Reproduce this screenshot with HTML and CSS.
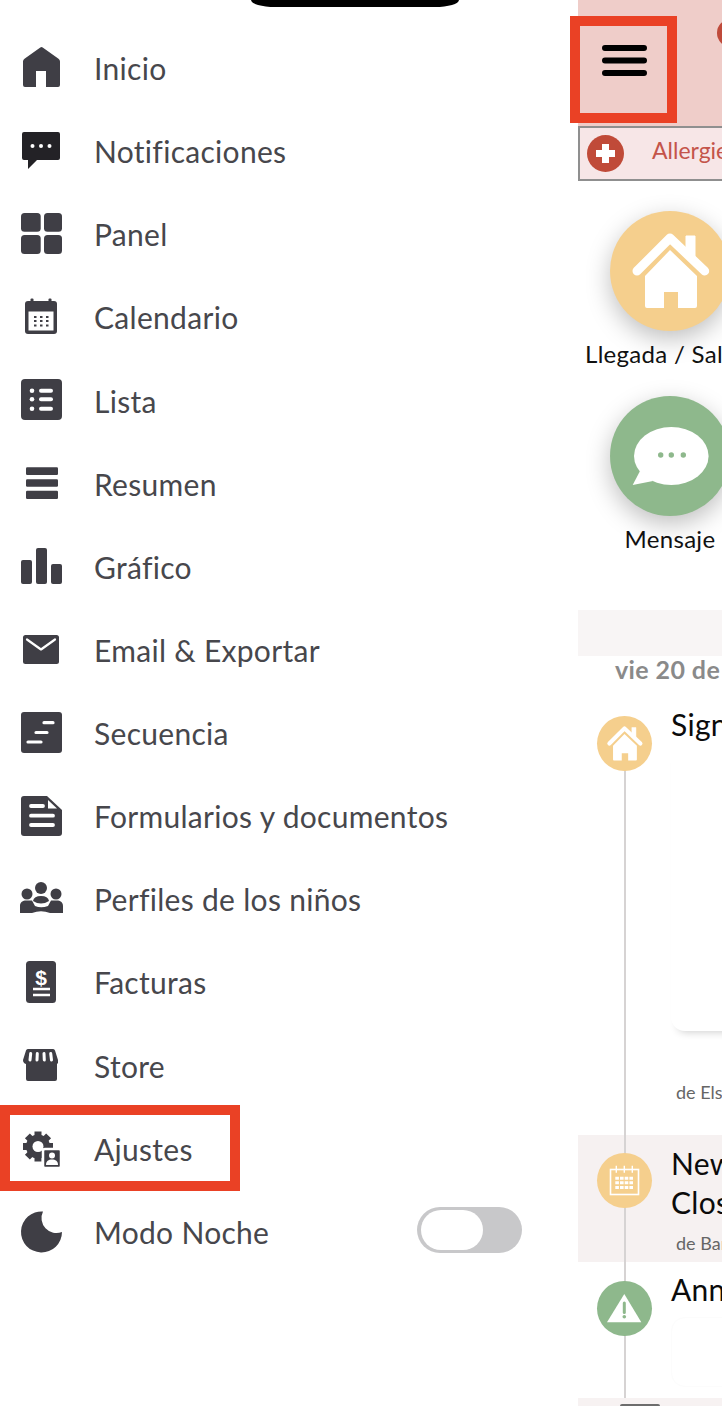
FILE: index.html
```html
<!DOCTYPE html>
<html lang="es">
<head>
<meta charset="utf-8">
<title>Menu</title>
<link rel="stylesheet" href="styles.css">
</head>
<body>
<svg class="defs" width="0" height="0" aria-hidden="true">
  <symbol id="house" viewBox="0 0 120 120">
    <path d="M76 25h9v22h-9z" fill="#fff" stroke="#fff" stroke-linejoin="round"/>
    <path d="M27 60 60 27l34.700 33" fill="none" stroke="#fff" stroke-width="9" stroke-linecap="round" stroke-linejoin="round"/>
    <path d="M60 39 87 65v30a2 2 0 0 1-2 2H68V81H54v16H37a2 2 0 0 1-2-2V65z" fill="#fff"/>
  </symbol>
</svg>
<div class="page">
  <nav class="drawer">
    <div class="item">
      <svg class="ico" viewBox="0 0 44 44"><path d="M21.300.5q1.200-.8 2.400 0L39.500 11.700Q41 12.800 41 14.500V38a2 2 0 0 1-2 2H27V24H17v16H6a2 2 0 0 1-2-2V14.500q0-1.700 1.500-2.800z"/></svg>
      <span class="label">Inicio</span>
    </div>
    <div class="item">
      <svg class="ico ico-dark" viewBox="0 0 44 44"><path d="M5 2h34a2 2 0 0 1 2 2v24a2 2 0 0 1-2 2H18l-9 9v-9H5a2 2 0 0 1-2-2V4a2 2 0 0 1 2-2z"/><g class="wh"><circle cx="13.500" cy="16" r="2"/><circle cx="22" cy="16" r="2"/><circle cx="30.500" cy="16" r="2"/></g></svg>
      <span class="label">Notificaciones</span>
    </div>
    <div class="item">
      <svg class="ico" viewBox="0 0 44 44"><rect x="2" y="0" width="19.700" height="18.700" rx="3.500"/><rect x="25" y="0" width="18" height="18.700" rx="3.500"/><rect x="2" y="22" width="19.700" height="19" rx="3.500"/><rect x="25" y="22" width="18" height="19" rx="3.500"/></svg>
      <span class="label">Panel</span>
    </div>
    <div class="item">
      <svg class="ico" viewBox="0 0 44 44"><rect x="6" y="5" width="32" height="33" rx="3"/><rect x="11.500" y="2.500" width="3" height="5" rx="1"/><rect x="29.500" y="2.500" width="3" height="5" rx="1"/><rect class="wh" x="9.500" y="15.500" width="25" height="19"/><path d="M15 21h15M15 25h15M15 29.500h15" fill="none" stroke="#3f3e45" stroke-width="2" stroke-dasharray="2.500 3.500"/></svg>
      <span class="label">Calendario</span>
    </div>
    <div class="item">
      <svg class="ico" viewBox="0 0 44 44"><rect x="2" y="-1" width="41" height="41" rx="4"/><g class="wh"><circle cx="13" cy="10.700" r="2.300"/><circle cx="13" cy="19.300" r="2.300"/><circle cx="13" cy="28.700" r="2.300"/><rect x="20" y="8.700" width="14" height="4" rx="2"/><rect x="20" y="17.300" width="14" height="4" rx="2"/><rect x="20" y="26.700" width="14" height="4" rx="2"/></g></svg>
      <span class="label">Lista</span>
    </div>
    <div class="item">
      <svg class="ico" viewBox="0 0 44 44"><rect x="7" y="4.300" width="32" height="7.700" rx="1.200"/><rect x="7" y="16.300" width="32" height="7.400" rx="1.200"/><rect x="7" y="27.700" width="32" height="8.300" rx="1.200"/></svg>
      <span class="label">Resumen</span>
    </div>
    <div class="item">
      <svg class="ico" viewBox="0 0 44 44"><rect x="2" y="14" width="11" height="24" rx="2"/><rect x="17" y="2" width="11" height="36" rx="2"/><rect x="32" y="18" width="11" height="20" rx="2"/></svg>
      <span class="label">Gráfico</span>
    </div>
    <div class="item">
      <svg class="ico" viewBox="0 0 44 44"><rect x="4" y="6" width="36" height="29" rx="2.500"/><path d="M8 10.500 22 20.500 36 10.500" fill="none" stroke="#fff" stroke-width="2.200" stroke-linecap="round" stroke-linejoin="round"/></svg>
      <span class="label">Email &amp; Exportar</span>
    </div>
    <div class="item">
      <svg class="ico" viewBox="0 0 44 44"><rect x="2" y="0" width="41" height="41" rx="3"/><path d="M25 10.700h9M17 20.500h11M9 30h13" fill="none" stroke="#fff" stroke-width="3.200" stroke-linecap="round"/></svg>
      <span class="label">Secuencia</span>
    </div>
    <div class="item">
      <svg class="ico" viewBox="0 0 44 44"><path d="M5 1h23l15 14v23a3 3 0 0 1-3 3H5a3 3 0 0 1-3-3V4a3 3 0 0 1 3-3z"/><path class="wh" d="M29 5 38 13.500H29z"/><path d="M12 11h12M12 20.700h22M12 30h22" fill="none" stroke="#fff" stroke-width="3.800" stroke-linecap="round"/></svg>
      <span class="label">Formularios y documentos</span>
    </div>
    <div class="item">
      <svg class="ico" viewBox="0 0 44 44"><circle cx="22" cy="10" r="6"/><circle cx="8" cy="16" r="5.500"/><circle cx="37" cy="16" r="5.500"/><path d="M1 35V28c0-4 3-5.500 6-5.500h6L16 28q6 2.500 13 0l3-5.500h6c3 0 6 1.500 6 5.500v7H31q-9-3.500-18 0z"/><path d="M14 23q1-5 8-5t8 5q-8 5-16 0z"/></svg>
      <span class="label">Perfiles de los niños</span>
    </div>
    <div class="item">
      <svg class="ico" viewBox="0 0 44 44"><rect x="7" y="0" width="30" height="42" rx="3.500"/><text class="dollar" x="22" y="24" text-anchor="middle">$</text><path d="M14 28h17M14 34h17" fill="none" stroke="#fff" stroke-width="2.400"/></svg>
      <span class="label">Facturas</span>
    </div>
    <div class="item">
      <svg class="ico" viewBox="0 0 44 44"><path d="M9 4h25a2 2 0 0 1 2 1.500L39 15q.500 3-1 4v15a2 2 0 0 1-2 2H9a2 2 0 0 1-2-2V19q-3-1-3-4L7 5.500A2 2 0 0 1 9 4z"/><path d="M11.700 8.500 11 15M18.300 8.500 18 15M25 8.500 25.300 15M31.700 8.500 32.500 15" fill="none" stroke="#fff" stroke-width="3" stroke-linecap="round"/></svg>
      <span class="label">Store</span>
    </div>
    <div class="item">
      <svg class="ico" viewBox="0 0 44 44">
        <g transform="translate(19 18.500)">
          <path d="M0-15V15M-15 0H15M-10.600-10.600 10.600 10.600M-10.600 10.600 10.600-10.600" fill="none" stroke="#3f3e45" stroke-width="7"/>
          <circle r="12"/>
          <circle class="wh" r="5.500"/>
        </g>
        <rect x="24" y="21" width="18" height="19" rx="2" stroke="#fff" stroke-width="2.500"/>
        <circle class="wh" cx="33" cy="27.500" r="3"/>
        <path class="wh" d="M27 37c0-4 2.500-5.500 6-5.500s6 1.500 6 5.500z"/>
      </svg>
      <span class="label">Ajustes</span>
    </div>
    <div class="item">
      <svg class="ico" viewBox="0 0 44 44"><path d="M24 .5A20.500 20.500 0 1 0 43 21 15 15 0 0 1 24 .5z"/></svg>
      <span class="label">Modo Noche</span>
      <span class="toggle"><span class="knob"></span></span>
    </div>
  </nav>

  <main class="panel">
    <header class="topbar">
      <svg class="burger" viewBox="0 0 45 31"><path d="M3 3h39M3 15.500h39M3 28h39" fill="none" stroke="#000" stroke-width="6" stroke-linecap="round"/></svg>
      <span class="avatar"></span>
    </header>
    <div class="allergy">
      <svg class="allergy-ico" viewBox="0 0 37 37"><circle cx="18.500" cy="18.500" r="18.500" fill="#c04a38"/><path d="M18.500 9v19M9 18.500h19" fill="none" stroke="#fff" stroke-width="7"/></svg>
      <span class="allergy-text">Allergies</span>
    </div>
    <section class="actions">
      <div class="action">
        <span class="bubble bubble-yellow"><svg class="bubble-ico" viewBox="0 0 120 120"><use href="#house"/></svg></span>
        <span class="action-label">Llegada / Salida</span>
      </div>
      <div class="action">
        <span class="bubble bubble-green">
          <svg class="bubble-ico" viewBox="0 0 120 120"><ellipse cx="61.300" cy="60" rx="37.300" ry="29" fill="#fff"/><path d="M30 75 22.700 89 43 85z" fill="#fff"/><g fill="#8eb88c"><circle cx="50.700" cy="59" r="2.700"/><circle cx="61.300" cy="59" r="2.700"/><circle cx="73.300" cy="59" r="2.700"/></g></svg>
        </span>
        <span class="action-label">Mensaje</span>
      </div>
    </section>
    <div class="band"></div>
    <div class="date">vie 20 de diciembre</div>
    <section class="timeline">
      <span class="line"></span>
      <article class="event event-first">
        <span class="marker marker-yellow"><svg class="marker-ico" viewBox="0 0 120 120"><use href="#house"/></svg></span>
        <div class="event-body">
          <div class="title title-raised">Sign In</div>
          <div class="card"></div>
          <div class="by by-first">de Elsa</div>
        </div>
      </article>
      <article class="event event-second">
        <span class="marker marker-yellow">
          <svg class="marker-ico" viewBox="0 0 55 55"><rect x="13.500" y="16.500" width="28" height="25" fill="none" stroke="#fff" stroke-width="1.600"/><path d="M19.300 12.700v7M27.300 12.700v7M35.300 12.700v7" fill="none" stroke="#fff" stroke-width="1.400"/><path d="M18.300 25.200h18.400M18.300 29.800h18.400M18.300 34.400h18.400" fill="none" stroke="#fff" stroke-width="3" stroke-dasharray="3.600 1.100"/></svg>
        </span>
        <div class="event-body">
          <div class="title title-lowered">New Year<br>Closed</div>
          <div class="by by-second">de Barbara</div>
        </div>
      </article>
      <article class="event event-third">
        <span class="marker marker-green">
          <svg class="marker-ico" viewBox="0 0 55 55"><path d="M27.300 13 44.300 41.300H10z" fill="#fff"/><path d="M27.300 22v9.500" fill="none" stroke="#8eb88c" stroke-width="3" stroke-linecap="round"/><circle cx="27.300" cy="35.800" r="1.800" fill="#8eb88c"/></svg>
        </span>
        <div class="event-body">
          <div class="title title-raised">Announcement</div>
          <div class="card card-faint"></div>
        </div>
      </article>
    </section>
    <div class="foot"><span class="foot-mark"></span></div>
  </main>

  <div class="notch"></div>
  <div class="mark mark-burger"></div>
  <div class="mark mark-settings"></div>
</div>
</body>
</html>
```

FILE: styles.css
```css
* { box-sizing: border-box; }

html, body {
  margin: 0;
  padding: 0;
  background: #fff;
}

.defs { position: absolute; }

.page {
  position: relative;
  display: flex;
  width: 722px;
  height: 1406px;
  overflow: hidden;
  font-family: Lato, "Open Sans", sans-serif;
}

/* Drawer */
.drawer {
  flex: 0 0 578px;
  padding: 27.5px 56px 0 19px;
}

.item {
  display: flex;
  align-items: center;
  height: 83.14px;
}

.ico {
  flex: 0 0 44px;
  width: 44px;
  height: 44px;
  overflow: visible;
  fill: #3f3e45;
}

.ico-dark { fill: #232226; }

.wh { fill: #fff; }

.dollar {
  font-family: "Liberation Sans", sans-serif;
  font-size: 21px;
  font-weight: 700;
  fill: #fff;
}

.label {
  margin: 0 0 2px 31px;
  font-size: 30px;
  line-height: 36px;
  letter-spacing: .3px;
  color: #47474c;
  white-space: nowrap;
}

.toggle {
  display: flex;
  align-items: center;
  width: 105px;
  height: 46px;
  margin: 0 0 6px auto;
  padding: 0 4px;
  border-radius: 23px;
  background: #c8c8ca;
}

.knob {
  width: 62px;
  height: 40px;
  border-radius: 20px;
  background: #fff;
}

/* Right panel */
.panel {
  flex: 0 0 144px;
  width: 144px;
  overflow: hidden;
}

.topbar {
  display: flex;
  height: 126px;
  width: 184px;
  background: #efcdc9;
}

.burger {
  width: 45px;
  height: 31px;
  margin: 45px 0 0 24px;
}

.avatar {
  width: 28px;
  height: 28px;
  margin: 19px 0 0 70px;
  border-radius: 50%;
  background: #bf4a3a;
}

.allergy {
  display: flex;
  align-items: center;
  width: 184px;
  height: 55px;
  padding-left: 7px;
  border: 2px solid #8f8f8f;
  border-right: 0;
  background: #f7e6e7;
}

.allergy-ico {
  flex: 0 0 37px;
  width: 37px;
  height: 37px;
}

.allergy-text {
  margin: 0 0 7px 28px;
  font-size: 23px;
  line-height: 30px;
  color: #c4544a;
  white-space: nowrap;
}

.actions {
  display: flex;
  flex-direction: column;
  gap: 26px;
  width: 184px;
  padding: 30px 0 55px;
}

.action {
  display: flex;
  flex-direction: column;
  align-items: center;
}

.bubble {
  width: 120px;
  height: 120px;
  border-radius: 50%;
  box-shadow: 0 8px 24px rgba(0, 0, 0, .25);
}

.bubble-yellow { background: #f5cf8d; }
.bubble-green { background: #8eb88c; }

.bubble-ico {
  display: block;
  width: 120px;
  height: 120px;
}

.action-label {
  margin: 8px 0 1px;
  font-size: 24px;
  line-height: 30px;
  letter-spacing: .3px;
  color: #111;
  white-space: nowrap;
}

.band {
  height: 46px;
  background: #f8f5f5;
}

.date {
  height: 50px;
  padding: 0 0 0 37px;
  font-size: 25px;
  line-height: 26px;
  letter-spacing: .4px;
  font-weight: 700;
  color: #8a8a8a;
  white-space: nowrap;
}

.timeline {
  position: relative;
}

.line {
  position: absolute;
  top: 30px;
  bottom: 0;
  left: 46px;
  width: 2px;
  background: #d6d3d3;
}

.event {
  display: flex;
  padding-left: 19px;
}

.event-first {
  height: 429px;
  padding-top: 10px;
}

.event-second {
  height: 127px;
  padding-top: 18px;
  background: #f6f1f1;
}

.event-third {
  height: 136px;
  padding-top: 19px;
}

.marker {
  position: relative;
  z-index: 1;
  flex: 0 0 55px;
  width: 55px;
  height: 55px;
  border-radius: 50%;
}

.marker-yellow { background: #f5cf8d; }
.marker-green { background: #8eb88c; }

.marker-ico {
  display: block;
  width: 55px;
  height: 55px;
}

.event-body {
  flex: 0 0 300px;
  margin: -10px 0 0 19px;
}

.title {
  font-size: 30px;
  line-height: 39px;
  letter-spacing: .3px;
  color: #0b0b0b;
  white-space: nowrap;
}

.title-raised {
  margin-top: -1px;
}

.title-lowered {
  margin-top: 1px;
}

.card {
  height: 287px;
  margin-top: 0;
  border-radius: 14px;
  background: #fff;
  box-shadow: 0 8px 8px -7px rgba(0, 0, 0, .2);
}

.card-faint {
  height: 70px;
  margin-top: 8px;
  box-shadow: none;
  border: 1px solid #fcfcfc;
}

.by {
  margin-left: 5px;
  font-size: 18px;
  line-height: 22px;
  color: #666;
  white-space: nowrap;
}

.by-first {
  margin-top: 50px;
}

.by-second {
  margin-top: 10px;
}

.foot {
  height: 8px;
  padding: 6px 0 0 42px;
  background: #f7f2f2;
}

.foot-mark {
  display: block;
  width: 40px;
  height: 2px;
  border-radius: 2px 2px 0 0;
  background: #6d6d6d;
}

/* Overlays */
.notch {
  position: absolute;
  top: 0;
  left: 251px;
  width: 208px;
  height: 7px;
  border-radius: 0 0 24px 24px / 0 0 7px 7px;
  background: #000;
}

.mark {
  position: absolute;
  border: 10px solid #ea4125;
}

.mark-burger {
  top: 16px;
  left: 570px;
  width: 107px;
  height: 107px;
}

.mark-settings {
  top: 1105px;
  left: 0;
  width: 240px;
  height: 86px;
}
```
